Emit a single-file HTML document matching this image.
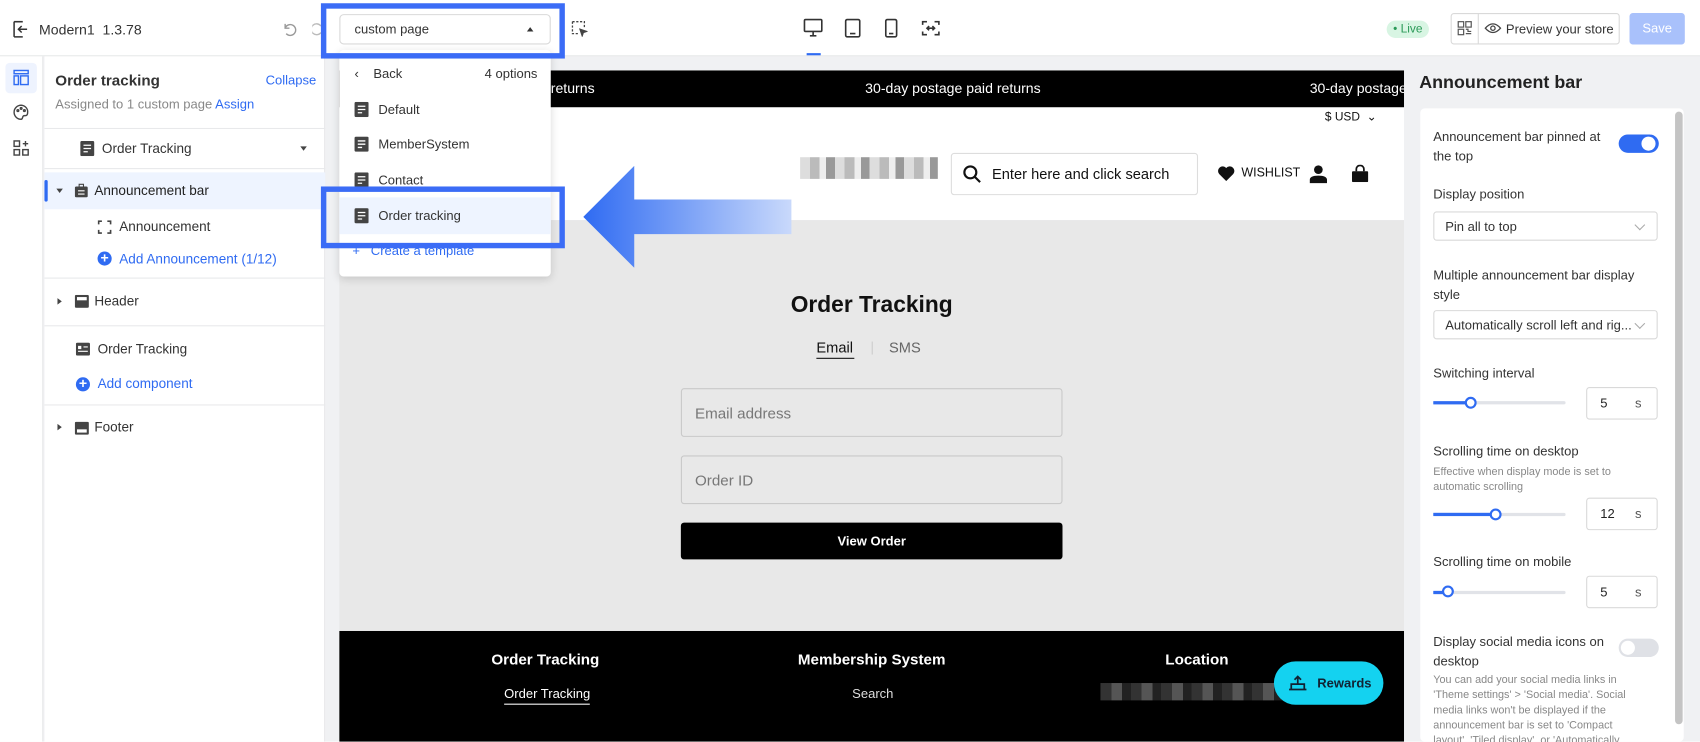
<!DOCTYPE html>
<html><head><meta charset="utf-8"><style>
*{box-sizing:border-box;margin:0;padding:0}
html,body{width:1700px;height:742px;overflow:hidden;background:#fff;font-family:"Liberation Sans",sans-serif}
#w{width:1568px;height:684px;position:relative;transform:scale(1.08418);transform-origin:0 0;background:#f0f1f3;color:#222}
.a{position:absolute}
.t{position:absolute;white-space:nowrap}
.hr{position:absolute;height:1px;background:#e8e9eb}
.blue{color:#2f6bf2}
svg{position:absolute}
.inp{position:absolute;border:1px solid #c9c9c9;border-radius:3px;background:#e8e8e8;color:#777;font-size:14px;padding-left:12px;display:flex;align-items:center}
.rt{position:absolute;font-size:12px;color:#333;white-space:nowrap}
.sel{position:absolute;left:1322px;width:207px;height:27px;border:1px solid #d9d9d9;border-radius:3px;font-size:12px;color:#333;padding-left:10px;display:flex;align-items:center}
.sel:after{content:"";position:absolute;right:12px;top:8px;width:6px;height:6px;border-right:1px solid #aaa;border-bottom:1px solid #aaa;transform:rotate(45deg)}
.trk{position:absolute;left:1322px;width:122px;height:3px;background:#e1e3e8;border-radius:2px}
.num{position:absolute;left:1463px;width:66px;height:30px;border:1px solid #d9d9d9;border-radius:3px;font-size:12px;display:flex;align-items:center;padding-left:12px}
.num span{position:absolute;right:14px;color:#555}
.knob{position:absolute;width:11px;height:11px;border:2px solid #2f6bf2;border-radius:50%;background:#fff}
</style></head><body><div id="w">
<div class="a" style="left:0;top:0;width:1568px;height:52px;background:#fff;border-bottom:1px solid #e5e6e8"></div>
<svg style="left:11px;top:19px" width="16" height="16" viewBox="0 0 16 16" fill="none" stroke="#333" stroke-width="1.4"><path d="M2 1v14M2 1h8M2 15h8M14 8H6M9 5L6 8l3 3"/></svg>
<div class="t" style="left:36px;top:20px;font-size:13px;color:#333">Modern1&nbsp; 1.3.78</div>
<svg style="left:260px;top:20px" width="14" height="14" viewBox="0 0 14 14" fill="none" stroke="#999" stroke-width="1.3"><path d="M3 2v4h4M3 6a5 5 0 1 1 1 5"/></svg>
<svg style="left:288px;top:20px" width="10" height="14" viewBox="0 0 10 14" fill="none" stroke="#bbb" stroke-width="1.3"><path d="M8 4a5 5 0 1 0 0 6"/></svg>
<div class="a" style="left:313px;top:13px;width:195px;height:28px;border:1px solid #d9d9d9;border-radius:4px;background:#fff"></div>
<div class="t" style="left:327px;top:20px;font-size:12px;color:#333">custom page</div>
<div class="a" style="left:486px;top:25px;border-left:3px solid transparent;border-right:3px solid transparent;border-bottom:4px solid #333"></div>
<svg style="left:527px;top:19px" width="15" height="15" viewBox="0 0 15 15" fill="none" stroke="#444" stroke-width="1.2" stroke-dasharray="2 1.5"><path d="M1 1h11v6M1 1v11h6"/><path d="M8 8l6 2-3 1-1 3z" fill="#444" stroke-dasharray="0"/></svg>
<svg style="left:741px;top:17px" width="18" height="17" viewBox="0 0 18 17" fill="none" stroke="#333" stroke-width="1.5"><rect x="1" y="1" width="16" height="11" rx="1"/><path d="M6 16h6M9 12v4"/></svg>
<div class="a" style="left:744px;top:49px;width:13px;height:2px;background:#2f6bf2"></div>
<svg style="left:779px;top:17px" width="15" height="18" viewBox="0 0 15 18" fill="none" stroke="#333" stroke-width="1.5"><rect x="1" y="1" width="13" height="16" rx="1.5"/><path d="M5 14h5"/></svg>
<svg style="left:816px;top:17px" width="12" height="18" viewBox="0 0 12 18" fill="none" stroke="#333" stroke-width="1.5"><rect x="1" y="1" width="10" height="16" rx="1.5"/><path d="M4 14h4"/></svg>
<svg style="left:850px;top:19px" width="17" height="14" viewBox="0 0 17 14" fill="none" stroke="#333" stroke-width="1.5"><path d="M1 4V1h4M12 1h4v3M16 10v3h-4M5 13H1v-3M5 7h7M7 5L5 7l2 2M10 5l2 2-2 2"/></svg>
<div class="a" style="left:1279px;top:19px;width:39px;height:16px;border-radius:8px;background:#d8f5e3;font-size:11px;color:#2b9a58;text-align:center;line-height:16px">• Live</div>
<div class="a" style="left:1338px;top:12px;width:156px;height:29px;border:1px solid #d9d9d9;border-radius:3px;background:#fff"></div>
<div class="a" style="left:1363px;top:12px;width:1px;height:29px;background:#d9d9d9"></div>
<svg style="left:1344px;top:19px" width="14" height="14" viewBox="0 0 14 14" fill="none" stroke="#555" stroke-width="1.1"><rect x="1" y="1" width="5" height="5"/><rect x="8" y="1" width="5" height="5"/><rect x="1" y="8" width="5" height="5"/><path d="M8 8h2v2h3M8 12h5"/></svg>
<svg style="left:1369px;top:20px" width="16" height="12" viewBox="0 0 16 12" fill="none" stroke="#444" stroke-width="1.2"><path d="M1 6q7-8 14 0q-7 8-14 0z"/><circle cx="8" cy="6" r="2"/></svg>
<div class="t" style="left:1389px;top:20px;font-size:12px;color:#333">Preview your store</div>
<div class="a" style="left:1503px;top:12px;width:51px;height:29px;border-radius:3px;background:#a9c1fb;color:#fff;font-size:12px;text-align:center;line-height:29px">Save</div>
<div class="a" style="left:0;top:52px;width:40px;height:632px;background:#fff;border-right:1px solid #e5e6e8"></div>
<div class="a" style="left:5px;top:58px;width:29px;height:28px;border-radius:4px;background:#eef3fe"></div>
<svg style="left:12px;top:64px" width="15" height="15" viewBox="0 0 15 15" fill="none" stroke="#2f6bf2" stroke-width="1.3"><rect x="1" y="1" width="13" height="3"/><rect x="1" y="6" width="4" height="8"/><rect x="7" y="6" width="7" height="8"/></svg>
<svg style="left:12px;top:96px" width="15" height="15" viewBox="0 0 15 15" fill="none" stroke="#444" stroke-width="1.3"><path d="M7.5 1a6.5 6.5 0 1 0 0 13c1.5 0 1-2 2-3s4 1 4-3.5A6.5 6 0 0 0 7.5 1z"/><circle cx="4.5" cy="6" r=".8"/><circle cx="7.5" cy="4" r=".8"/><circle cx="10.5" cy="6" r=".8"/></svg>
<svg style="left:12px;top:129px" width="15" height="15" viewBox="0 0 15 15" fill="none" stroke="#444" stroke-width="1.3"><rect x="1" y="1" width="5" height="5"/><rect x="1" y="9" width="5" height="5"/><rect x="9" y="9" width="5" height="5"/><path d="M11.5 1v5M9 3.5h5"/></svg>
<div class="a" style="left:41px;top:52px;width:259px;height:632px;background:#fff;border-right:1px solid #e5e6e8"></div>
<div class="t" style="left:51px;top:66px;font-size:14px;font-weight:bold;color:#333">Order tracking</div>
<div class="t blue" style="left:245px;top:67px;font-size:12px">Collapse</div>
<div class="t" style="left:51px;top:89px;font-size:12px;color:#888">Assigned to 1 custom page <span class="blue">Assign</span></div>
<div class="hr" style="left:41px;top:118px;width:259px"></div>
<svg style="left:74px;top:130px" width="13" height="14" viewBox="0 0 13 14"><rect width="13" height="14" rx="1.5" fill="#444"/><path d="M3 4h7M3 7h7M3 10h4" stroke="#fff" stroke-width="1.2"/></svg>
<div class="t" style="left:94px;top:130px;font-size:12.5px;color:#333">Order Tracking</div>
<div class="a" style="left:277px;top:135px;border-left:3.5px solid transparent;border-right:3.5px solid transparent;border-top:4px solid #444"></div>
<div class="hr" style="left:41px;top:155px;width:259px"></div>
<div class="a" style="left:41px;top:159px;width:259px;height:34px;background:#eef4ff"></div>
<div class="a" style="left:41px;top:166px;width:3px;height:20px;background:#2f6bf2;border-radius:2px"></div>
<div class="a" style="left:52px;top:174px;border-left:3.5px solid transparent;border-right:3.5px solid transparent;border-top:4px solid #444"></div>
<svg style="left:69px;top:169px" width="12" height="13" viewBox="0 0 12 13"><rect y="3" width="12" height="10" rx="1.5" fill="#444"/><path d="M4 3V1h4v2" stroke="#444" fill="none"/><path d="M3 7h6M3 10h6" stroke="#fff"/></svg>
<div class="t" style="left:87px;top:169px;font-size:12.5px;color:#222">Announcement bar</div>
<svg style="left:90px;top:203px" width="13" height="13" viewBox="0 0 13 13" fill="none" stroke="#444" stroke-width="1.5"><path d="M1 4V1h3M9 1h3v3M12 9v3H9M4 12H1V9"/></svg>
<div class="t" style="left:110px;top:202px;font-size:12.5px;color:#333">Announcement</div>
<div class="a" style="left:90px;top:232px;width:13px;height:13px;border-radius:50%;background:#2f6bf2;color:#fff;font-size:13px;line-height:12px;text-align:center;font-weight:bold">+</div>
<div class="t blue" style="left:110px;top:232px;font-size:12.5px">Add Announcement (1/12)</div>
<div class="hr" style="left:41px;top:256px;width:259px"></div>
<div class="a" style="left:53px;top:275px;border-top:3.5px solid transparent;border-bottom:3.5px solid transparent;border-left:4px solid #444"></div>
<svg style="left:69px;top:272px" width="13" height="12" viewBox="0 0 13 12"><rect width="13" height="12" rx="1.5" fill="#444"/><rect x="2" y="2" width="9" height="3" fill="#fff"/></svg>
<div class="t" style="left:87px;top:271px;font-size:12.5px;color:#333">Header</div>
<div class="hr" style="left:41px;top:300px;width:259px"></div>
<svg style="left:70px;top:316px" width="13" height="12" viewBox="0 0 13 12"><rect width="13" height="12" rx="1.5" fill="#444"/><rect x="2" y="3" width="3" height="3" fill="#fff"/><path d="M7 4h4M2 8h9" stroke="#fff"/></svg>
<div class="t" style="left:90px;top:315px;font-size:12.5px;color:#333">Order Tracking</div>
<div class="a" style="left:70px;top:348px;width:13px;height:13px;border-radius:50%;background:#2f6bf2;color:#fff;font-size:13px;line-height:12px;text-align:center;font-weight:bold">+</div>
<div class="t blue" style="left:90px;top:347px;font-size:12.5px">Add component</div>
<div class="hr" style="left:41px;top:373px;width:259px"></div>
<div class="a" style="left:53px;top:391px;border-top:3.5px solid transparent;border-bottom:3.5px solid transparent;border-left:4px solid #444"></div>
<svg style="left:69px;top:389px" width="13" height="12" viewBox="0 0 13 12"><rect width="13" height="12" rx="1.5" fill="#444"/><rect x="2" y="7" width="9" height="3" fill="#fff"/></svg>
<div class="t" style="left:87px;top:387px;font-size:12.5px;color:#333">Footer</div>
<div class="a" style="left:313px;top:65px;width:982px;height:34px;background:#000"></div>
<div class="t" style="left:508px;top:74px;font-size:13px;color:#fff">returns</div>
<div class="t" style="left:798px;top:74px;font-size:13px;color:#fff">30-day postage paid returns</div>
<div class="t" style="left:1208px;top:74px;font-size:13px;color:#fff;width:87px;overflow:hidden">30-day postage</div>
<div class="a" style="left:313px;top:99px;width:982px;height:104px;background:#fff"></div>
<div class="t" style="left:1222px;top:101px;font-size:11px;color:#111">$ USD&nbsp; ⌄</div>
<div class="a" style="left:738px;top:145px;width:127px;height:20px;background:repeating-linear-gradient(90deg,#ddd 0 9px,#bbb 9px 18px,#eee 18px 24px,#999 24px 32px)"></div>
<div class="a" style="left:877px;top:141px;width:228px;height:39px;border:1px solid #ddd;border-radius:3px"></div>
<svg style="left:888px;top:152px" width="17" height="17" viewBox="0 0 17 17" fill="none" stroke="#111" stroke-width="2"><circle cx="7" cy="7" r="5.5"/><path d="M11 11l5 5"/></svg>
<div class="t" style="left:915px;top:153px;font-size:13.5px;color:#111">Enter here and click search</div>
<svg style="left:1123px;top:153px" width="16" height="14" viewBox="0 0 16 14"><path d="M8 14L1.5 7.5A4 4 0 0 1 8 2a4 4 0 0 1 6.5 5.5z" fill="#111"/></svg>
<div class="t" style="left:1145px;top:154px;font-size:11.5px;color:#111">WISHLIST</div>
<svg style="left:1208px;top:152px" width="16" height="17" viewBox="0 0 16 17"><circle cx="8" cy="4.5" r="4" fill="#111"/><path d="M0 17v-3q0-4 8-4t8 4v3z" fill="#111"/></svg>
<svg style="left:1247px;top:152px" width="15" height="16" viewBox="0 0 15 16"><path d="M4 6V4a3.5 3.5 0 0 1 7 0v2" stroke="#111" stroke-width="1.6" fill="none"/><rect y="6" width="15" height="10" rx="1" fill="#111"/></svg>
<div class="a" style="left:313px;top:203px;width:982px;height:379px;background:#e8e8e8"></div>
<div class="t" style="left:804px;top:270px;transform:translateX(-50%);font-size:21px;font-weight:bold;color:#111">Order Tracking</div>
<div class="t" style="left:753px;top:313px;font-size:13.5px;color:#111">Email</div>
<div class="a" style="left:753px;top:330px;width:35px;height:1px;background:#111"></div>
<div class="a" style="left:804px;top:315px;width:1px;height:12px;background:#ccc"></div>
<div class="t" style="left:820px;top:313px;font-size:13.5px;color:#666">SMS</div>
<div class="inp" style="left:628px;top:358px;width:352px;height:45px">Email address</div>
<div class="inp" style="left:628px;top:420px;width:352px;height:45px">Order ID</div>
<div class="a" style="left:628px;top:482px;width:352px;height:34px;background:#000;border-radius:3px;color:#fff;font-size:12px;font-weight:bold;text-align:center;line-height:34px">View Order</div>
<div class="a" style="left:313px;top:582px;width:982px;height:102px;background:#000"></div>
<div class="t" style="left:503px;top:600px;transform:translateX(-50%);font-size:14px;font-weight:bold;color:#fff">Order Tracking</div>
<div class="t" style="left:804px;top:600px;transform:translateX(-50%);font-size:14px;font-weight:bold;color:#fff">Membership System</div>
<div class="t" style="left:1104px;top:600px;transform:translateX(-50%);font-size:14px;font-weight:bold;color:#fff">Location</div>
<div class="t" style="left:465px;top:633px;font-size:12px;color:#fff;border-bottom:1px solid #fff;padding-bottom:2px">Order Tracking</div>
<div class="t" style="left:786px;top:633px;font-size:12px;color:#ddd">Search</div>
<div class="a" style="left:1015px;top:630px;width:170px;height:16px;background:repeating-linear-gradient(90deg,#333 0 10px,#555 10px 20px,#222 20px 28px)"></div>
<div class="a" style="left:1175px;top:610px;width:101px;height:40px;border-radius:20px;background:#14d2f0;font-size:12px;font-weight:bold;color:#123;line-height:40px;padding-left:40px">Rewards</div>
<svg style="left:1187px;top:619px" width="20" height="20" viewBox="0 0 20 20" fill="none" stroke="#123" stroke-width="1.6"><path d="M2 17h16M4 17v-5h12v5M10 12V6M7 8l3-3 3 3"/></svg>
<div class="a" style="left:313px;top:46px;width:195px;height:209px;background:#fff;border-radius:4px;box-shadow:0 2px 8px rgba(0,0,0,.15)"></div>
<div class="t" style="left:327px;top:61px;font-size:12px;color:#333">‹&nbsp;&nbsp;&nbsp; Back</div>
<div class="t" style="left:447px;top:61px;font-size:12px;color:#333">4 options</div>
<div class="a" style="left:313px;top:182px;width:195px;height:34px;background:#eef4ff"></div>
<svg style="left:327px;top:94px" width="13" height="14" viewBox="0 0 13 14"><rect width="13" height="14" rx="1.5" fill="#444"/><path d="M3 4h7M3 7h7M3 10h4" stroke="#fff" stroke-width="1.2"/></svg>
<div class="t" style="left:349px;top:94px;font-size:12px;color:#333">Default</div>
<svg style="left:327px;top:126px" width="13" height="14" viewBox="0 0 13 14"><rect width="13" height="14" rx="1.5" fill="#444"/><path d="M3 4h7M3 7h7M3 10h4" stroke="#fff" stroke-width="1.2"/></svg>
<div class="t" style="left:349px;top:126px;font-size:12px;color:#333">MemberSystem</div>
<svg style="left:327px;top:159px" width="13" height="14" viewBox="0 0 13 14"><rect width="13" height="14" rx="1.5" fill="#444"/><path d="M3 4h7M3 7h7M3 10h4" stroke="#fff" stroke-width="1.2"/></svg>
<div class="t" style="left:349px;top:159px;font-size:12px;color:#333">Contact</div>
<svg style="left:327px;top:192px" width="13" height="14" viewBox="0 0 13 14"><rect width="13" height="14" rx="1.5" fill="#444"/><path d="M3 4h7M3 7h7M3 10h4" stroke="#fff" stroke-width="1.2"/></svg>
<div class="t" style="left:349px;top:192px;font-size:12px;color:#333">Order tracking</div>
<div class="t blue" style="left:325px;top:224px;font-size:12px">+&nbsp;&nbsp; Create a template</div>
<div class="a" style="left:296px;top:3px;width:225px;height:51px;border:5px solid #3b6cf6"></div>
<div class="a" style="left:296px;top:172px;width:225px;height:57px;border:5px solid #3b6cf6"></div>
<svg style="left:538px;top:153px" width="192" height="94" viewBox="0 0 192 94"><defs><linearGradient id="g" x1="0" x2="1"><stop offset="0" stop-color="#2f6bf2"/><stop offset="1" stop-color="#c9d9fb"/></linearGradient></defs><path d="M0 47L47 0v31h145v32H47v31z" fill="url(#g)"/></svg>
<div class="t" style="left:1309px;top:67px;font-size:16.5px;font-weight:bold;color:#222">Announcement bar</div>
<div class="a" style="left:1310px;top:100px;width:243px;height:584px;background:#fff;border-radius:4px"></div>
<div class="a" style="left:1545px;top:103px;width:7px;height:565px;background:#c4c4c4;border-radius:4px"></div>
<div class="rt" style="left:1322px;top:117px;line-height:18px">Announcement bar pinned at<br>the top</div>
<div class="a" style="left:1493px;top:124px;width:37px;height:17px;border-radius:9px;background:#2f6bf2"></div>
<div class="a" style="left:1514px;top:126px;width:13px;height:13px;border-radius:50%;background:#fff"></div>
<div class="rt" style="left:1322px;top:172px">Display position</div>
<div class="sel" style="top:195px">Pin all to top</div>
<div class="rt" style="left:1322px;top:245px;line-height:18px">Multiple announcement bar display<br>style</div>
<div class="sel" style="top:286px">Automatically scroll left and rig...</div>
<div class="rt" style="left:1322px;top:337px">Switching interval</div>
<div class="trk" style="top:370px"></div><div class="a" style="left:1322px;top:370px;width:35px;height:3px;background:#2f6bf2"></div><div class="knob" style="left:1351px;top:366px"></div>
<div class="num" style="top:357px">5<span>s</span></div>
<div class="rt" style="left:1322px;top:409px">Scrolling time on desktop</div>
<div class="rt" style="left:1322px;top:429px;font-size:10px;color:#888;line-height:14px">Effective when display mode is set to<br>automatic scrolling</div>
<div class="trk" style="top:473px"></div><div class="a" style="left:1322px;top:473px;width:58px;height:3px;background:#2f6bf2"></div><div class="knob" style="left:1374px;top:469px"></div>
<div class="num" style="top:459px">12<span>s</span></div>
<div class="rt" style="left:1322px;top:511px">Scrolling time on mobile</div>
<div class="trk" style="top:545px"></div><div class="a" style="left:1322px;top:545px;width:14px;height:3px;background:#2f6bf2"></div><div class="knob" style="left:1330px;top:540px"></div>
<div class="num" style="top:531px">5<span>s</span></div>
<div class="rt" style="left:1322px;top:583px;line-height:18px">Display social media icons on<br>desktop</div>
<div class="a" style="left:1493px;top:589px;width:37px;height:17px;border-radius:9px;background:#dfe1e6"></div>
<div class="a" style="left:1495px;top:591px;width:13px;height:13px;border-radius:50%;background:#fff"></div>
<div class="rt" style="left:1322px;top:621px;font-size:10px;color:#888;line-height:14px">You can add your social media links in<br>'Theme settings' &gt; 'Social media'. Social<br>media links won't be displayed if the<br>announcement bar is set to 'Compact<br>layout', 'Tiled display', or 'Automatically</div>
</div></body></html>
